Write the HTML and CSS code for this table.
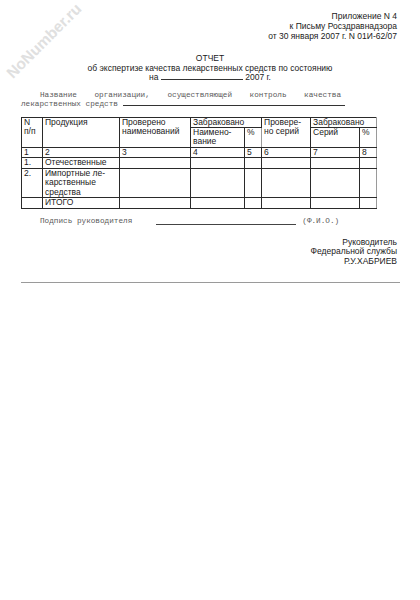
FILE: index.html
```html
<!DOCTYPE html>
<html lang="ru">
<head>
<meta charset="utf-8">
<link rel="stylesheet" href="styles.css">
</head>
<body>
<div class="page">
  <div class="watermark">NoNumber.ru</div>
  <div class="appendix">
    <div>Приложение N 4</div>
    <div>к Письму Росздравнадзора</div>
    <div>от 30 января 2007 г. N 01И-62/07</div>
  </div>
  <div class="title">
    <div>ОТЧЕТ</div>
    <div>об экспертизе качества лекарственных средств по состоянию</div>
    <div>на <span class="blank date-blank"></span> 2007 г.</div>
  </div>
  <div class="org">
    <div class="org-first">Название организации, осуществляющей контроль качества</div>
    <div class="org-second">лекарственных средств <span class="blank org-blank"></span></div>
  </div>
  <table class="report">
    <colgroup>
      <col class="c1"><col class="c2"><col class="c3"><col class="c4"><col class="c5"><col class="c6"><col class="c7"><col class="c8">
    </colgroup>
    <tr class="head">
      <td rowspan="2">N<br>п/п</td>
      <td rowspan="2">Продукция</td>
      <td rowspan="2">Проверено<br>наименований</td>
      <td colspan="2">Забраковано</td>
      <td rowspan="2" class="soft-l">Провере-<br>но серий</td>
      <td colspan="2" class="soft-r">Забраковано</td>
    </tr>
    <tr class="sub">
      <td>Наимено-<br>вание</td>
      <td>%</td>
      <td>Серий</td>
      <td class="soft-r">%</td>
    </tr>
    <tr>
      <td>1</td><td>2</td><td>3</td><td>4</td><td>5</td><td class="soft-l">6</td><td>7</td><td class="soft-r">8</td>
    </tr>
    <tr>
      <td>1.</td><td>Отечественные</td><td></td><td></td><td></td><td class="soft-l"></td><td></td><td class="soft-r"></td>
    </tr>
    <tr class="tall">
      <td>2.</td><td>Импортные ле-<br>карственные<br>средства</td><td></td><td></td><td></td><td class="soft-l"></td><td></td><td class="soft-r"></td>
    </tr>
    <tr class="total">
      <td></td><td>ИТОГО</td><td></td><td></td><td></td><td class="soft-l"></td><td></td><td class="soft-r"></td>
    </tr>
  </table>
  <div class="sign">
    <span class="sign-label">Подпись руководителя</span>
    <span class="blank sign-blank"></span>
    <span class="sign-fio">(Ф.И.О.)</span>
  </div>
  <div class="chief">
    <div>Руководитель</div>
    <div>Федеральной службы</div>
    <div>Р.У.ХАБРИЕВ</div>
  </div>
  <div class="rule"></div>
</div>
</body>
</html>
```

FILE: styles.css
```css
html, body {
  margin: 0;
  padding: 0;
  background: #ffffff;
}

.page {
  position: relative;
  width: 420px;
  height: 600px;
  font-family: "Liberation Sans", Arial, sans-serif;
  font-size: 8.5px;
  line-height: 9.5px;
  color: #1a1a1a;
  overflow: hidden;
}

.watermark {
  position: absolute;
  left: -5px;
  top: 33px;
  transform: rotate(-45deg);
  font-family: "Liberation Sans", Arial, sans-serif;
  font-weight: bold;
  font-size: 15.5px;
  line-height: 16px;
  color: #e0e0e0;
}

.appendix {
  text-align: right;
  padding: 11px 23px 0 0;
  line-height: 10px;
}

.title {
  text-align: center;
  padding-top: 13px;
}

.blank {
  display: inline-block;
  border-bottom: 1px solid #333;
  vertical-align: baseline;
}

.date-blank {
  width: 82px;
}

.org {
  font-family: "Liberation Mono", "Courier New", monospace;
  font-size: 7.7px;
  line-height: 9px;
  color: #5a5a5a;
  margin: 8px 0 0 21px;
  width: 320px;
}

.org-first {
  text-align: justify;
  text-align-last: justify;
  padding-left: 19px;
}

.org-second {
  white-space: nowrap;
}

.org-blank {
  width: 222px;
}

.report {
  border-collapse: collapse;
  margin: 8px 0 0 21px;
  width: 355px;
  table-layout: fixed;
}

.c1 { width: 21px; }
.c2 { width: 77px; }
.c3 { width: 71px; }
.c4 { width: 54px; }
.c5 { width: 17px; }
.c6 { width: 49px; }
.c7 { width: 49px; }
.c8 { width: 17px; }

.report td {
  border: 1px solid #2a2a2a;
  padding: 0 2px;
  vertical-align: top;
  text-align: left;
  line-height: 9.5px;
  height: 8px;
}

.report tr.head td {
  height: 7px;
  line-height: 9px;
}

.report .soft-l {
  border-left: 1px solid #9a9a9a;
}

.report .soft-r {
  border-right: 1px solid #9a9a9a;
}

.report tr.tall td {
  height: 27px;
}

.report tr.total td {
  border-top: 1px solid #9a9a9a;
  height: 7px;
}

.sign {
  display: flex;
  align-items: flex-end;
  margin: 8px 0 0 40px;
  font-family: "Liberation Mono", "Courier New", monospace;
  font-size: 7.7px;
  line-height: 9px;
  color: #5a5a5a;
}

.sign-blank {
  width: 140px;
  margin-left: 24px;
  margin-bottom: 1px;
  border-bottom-color: #444;
}

.sign-fio {
  margin-left: 6px;
}

.chief {
  text-align: right;
  padding: 12px 23px 0 0;
  line-height: 9.5px;
}

.rule {
  margin: 16px 20px 0 21px;
  border-top: 1px solid #9a9a9a;
}
```
